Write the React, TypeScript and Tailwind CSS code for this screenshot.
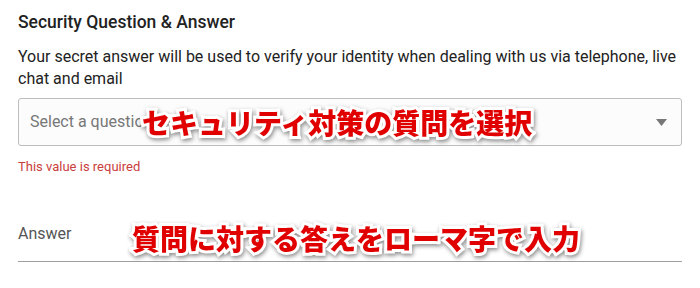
import React from "react";

const overlay =
  "absolute whitespace-nowrap font-black text-[#e00000] text-[28px] leading-none tracking-[0px] [font-family:'Noto_Sans_CJK_JP',sans-serif] [paint-order:stroke_fill] [-webkit-text-stroke:6px_white] [filter:drop-shadow(1px_2px_2px_rgba(0,0,0,0.45))]";

export default function App() {
  return (
    <div className="relative w-[700px] h-[288px] bg-white overflow-hidden [font-family:Roboto,'Liberation_Sans',sans-serif]">
      <div className="flex flex-col pl-[18px] pr-[18px] pt-[12px]">
        <h2 className="text-[17.5px] leading-[20px] font-medium text-[#222]">
          Security Question &amp; Answer
        </h2>
        <p className="mt-[14px] text-[16px] leading-[22px] text-[#222]">
          Your secret answer will be used to verify your identity when dealing with us via telephone, live chat and email
        </p>
        <div className="mt-[8px] h-[48px] flex items-center justify-between rounded-[3px] border border-[#bdbdbd] bg-[#fcfcfc] pl-[11px] pr-[14px]">
          <span className="text-[16px] text-[#777]">Select a question</span>
          <svg width="11" height="7" viewBox="0 0 11 7">
            <path d="M0 0 H11 L5.5 7 Z" fill="#777" />
          </svg>
        </div>
        <div className="mt-[13px] text-[13px] leading-[16px] text-[#c9403d]">This value is required</div>
        <div className="mt-[45px] pt-[2px] pb-[15px] flex items-center border-b border-[#9e9e9e]">
          <span className="text-[16px] leading-[24px] text-[#555]">Answer</span>
        </div>
      </div>
      <div className={overlay + " left-[142px] top-[108px]"}>セキュリティ対策の質問を選択</div>
      <div className={overlay + " left-[132px] top-[224px]"}>質問に対する答えをローマ字で入力</div>
    </div>
  );
}
